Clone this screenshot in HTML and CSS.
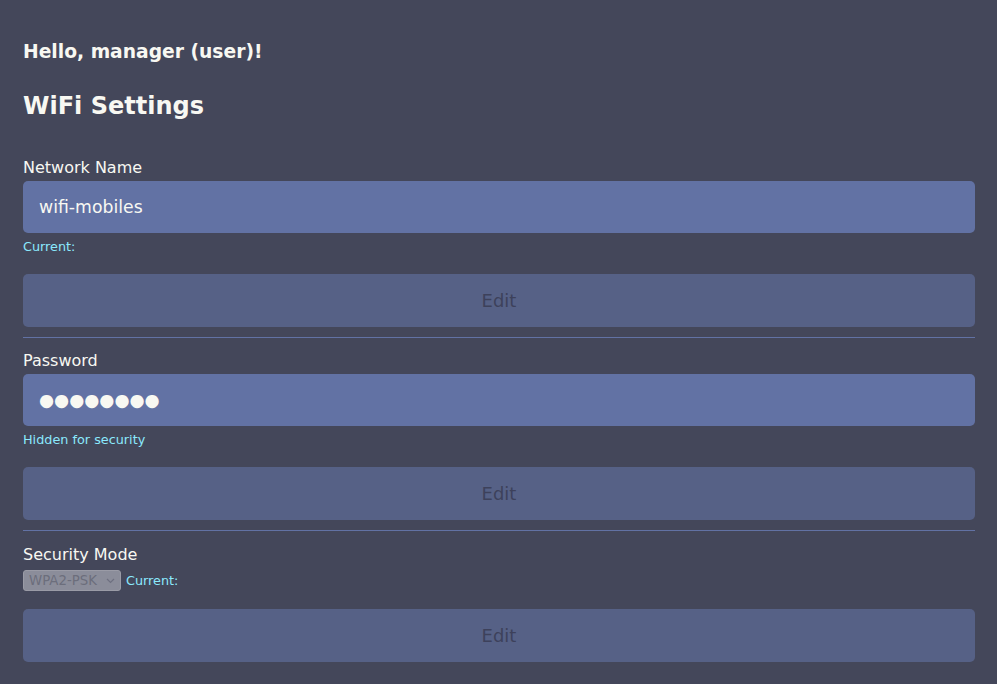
FILE: index.html
```html
<!DOCTYPE html>
<html lang="en">
<head>
<meta charset="utf-8">
<title>WiFi Settings</title>
<link rel="stylesheet" href="styles.css">
</head>
<body>
<main class="page">
  <h1 class="greeting">Hello, manager (user)!</h1>
  <h2 class="title">WiFi Settings</h2>

  <section class="field first">
    <label class="label" for="ssid">Network Name</label>
    <input class="text-input" id="ssid" type="text" value="wifi-mobiles">
    <small class="hint">Current:</small>
    <button class="edit-btn" disabled>Edit</button>
  </section>
  <hr class="divider">

  <section class="field second">
    <label class="label" for="pw">Password</label>
    <input class="text-input" id="pw" type="text" value="●●●●●●●●">
    <small class="hint">Hidden for security</small>
    <button class="edit-btn" disabled>Edit</button>
  </section>
  <hr class="divider">

  <section class="field third">
    <label class="label" for="mode">Security Mode</label>
    <div class="select-row">
      <div class="select-wrap">
        <select class="mode-select" id="mode" disabled>
          <option>WPA2-PSK</option>
        </select>
        <svg class="chevron" width="9" height="6" viewBox="0 0 9 6"><path d="M1 1l3.5 3.5L8 1" fill="none" stroke="#6e7080" stroke-width="1.2"/></svg>
      </div>
      <small class="hint inline">Current:</small>
    </div>
    <button class="edit-btn last" disabled>Edit</button>
  </section>
</main>
</body>
</html>
```

FILE: styles.css
```css
html, body {
  margin: 0;
  background: #44475a;
}
body {
  font-family: "DejaVu Sans", sans-serif;
  color: #f8f8f2;
}
.page {
  padding: 41px 22px 0 23px;
  display: flex;
  flex-direction: column;
}
.greeting {
  margin: 0;
  font-size: 18.72px;
  line-height: 22px;
  font-weight: bold;
}
.title {
  margin: 29px 0 0;
  font-size: 24px;
  line-height: 28px;
  font-weight: bold;
}
.field {
  display: flex;
  flex-direction: column;
}
.field.first {
  margin-top: 38px;
}
.field.second {
  margin-top: 13px;
}
.field.third {
  margin-top: 14px;
}
.label {
  font-size: 16px;
  line-height: 19px;
}
.text-input {
  margin-top: 4px;
  box-sizing: border-box;
  height: 52px;
  border: none;
  border-radius: 5px;
  background: #6272a4;
  color: #f8f8f2;
  font-family: "DejaVu Sans", sans-serif;
  font-size: 17.3px;
  padding: 0 16px;
  outline: none;
}
.hint {
  margin-top: 6px;
  font-size: 12.8px;
  line-height: 16px;
  color: #8be9fd;
}
.edit-btn {
  margin-top: 19px;
  height: 53px;
  border: none;
  border-radius: 5px;
  background: #566186;
  color: #3d415b;
  font-family: "DejaVu Sans", sans-serif;
  font-size: 18px;
}
.divider {
  margin: 10px 0 0;
  border: none;
  border-top: 1px solid #6272a4;
  height: 0;
}
.select-row {
  margin-top: 6px;
  display: flex;
  align-items: center;
  gap: 5px;
}
.select-wrap {
  position: relative;
  display: flex;
}
.mode-select {
  appearance: none;
  -webkit-appearance: none;
  box-sizing: border-box;
  width: 98px;
  height: 21px;
  padding: 0 18px 0 5px;
  border: 1px solid #9a9ba6;
  border-radius: 3px;
  background: #8b8d9a;
  color: #6c6e7c;
  font-family: "DejaVu Sans", sans-serif;
  font-size: 13.33px;
  opacity: 1;
}
.chevron {
  position: absolute;
  right: 6px;
  top: 8px;
  pointer-events: none;
}
.hint.inline {
  margin-top: 0;
}
.edit-btn.last {
  margin-top: 18px;
}
```
